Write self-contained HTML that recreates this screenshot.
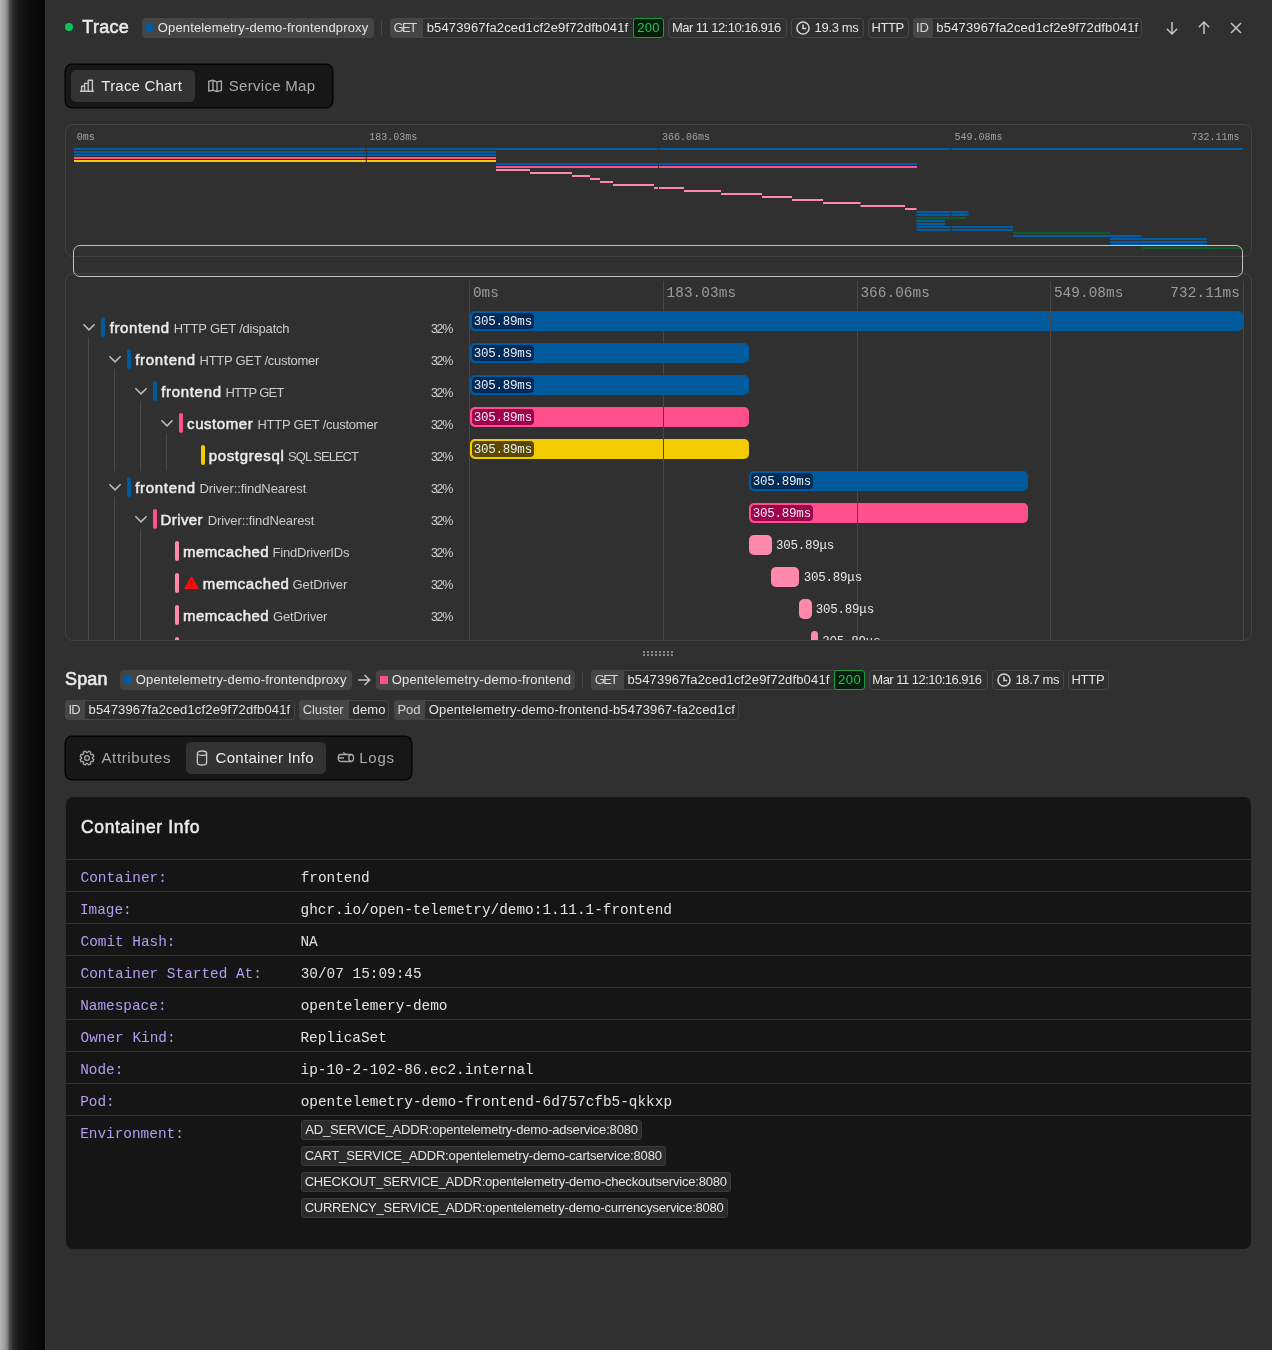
<!DOCTYPE html>
<html><head><meta charset="utf-8">
<style>
*{box-sizing:border-box;margin:0;padding:0}
html,body{width:1272px;height:1350px;overflow:hidden;background:#303030;font-family:"Liberation Sans",sans-serif;color:#e6e6e6}
.a{position:absolute}
body>div.root{position:absolute;left:0;top:0;width:1272px;height:1350px;will-change:transform}
</style></head><body><div class="root">
<div class="a" style="left:0;top:0;width:45px;height:1350px;background:linear-gradient(90deg,#b4b4b4 0px,#a2a2a2 4px,#8a8a8a 7px,#505050 9.5px,#2c2c2c 13px,#181818 18px,#0e0e0e 28px,#090909 38px,#040404 45px)"></div>
<div class="a" style="left:45px;top:0px;width:1px;height:1350px;background:#3a3a3a;border-radius:0px;"></div>
<div class="a" style="left:65px;top:23px;width:8px;height:8px;background:#12c05a;border-radius:4px;"></div>
<div class="a" style="left:82.27px;top:17px;font-family:'Liberation Sans',sans-serif;font-size:18px;font-weight:400;line-height:20px;color:#ececec;white-space:nowrap;letter-spacing:0.286px;-webkit-text-stroke:0.55px #ececec;">Trace</div>
<div class="a" style="left:142px;top:18px;width:232px;height:20px;background:#444444;border-radius:4px;"></div>
<div class="a" style="left:146px;top:24.0px;width:8px;height:8.0px;background:#005a9e;border-radius:1px;"></div>
<div class="a" style="left:157.78px;top:18px;font-family:'Liberation Sans',sans-serif;font-size:13px;font-weight:400;line-height:20px;color:#e4e4e4;white-space:nowrap;letter-spacing:0.145px;">Opentelemetry-demo-frontendproxy</div>
<div class="a" style="left:381px;top:20px;width:1px;height:16px;background:#474747;border-radius:0px;"></div>
<div class="a" style="left:390px;top:18px;width:274px;height:20px;background:#2d2d2d;border:1px solid #474747;border-radius:4px;"></div>
<div class="a" style="left:390px;top:18px;width:33px;height:20px;background:#464646;border-radius:4px;border-top-right-radius:0;border-bottom-right-radius:0"></div>
<div class="a" style="left:393.55px;top:18px;font-family:'Liberation Sans',sans-serif;font-size:13px;font-weight:400;line-height:20px;color:#d6d6d6;white-space:nowrap;letter-spacing:-1.586px;">GET</div>
<div class="a" style="left:426.76px;top:18px;font-family:'Liberation Sans',sans-serif;font-size:13px;font-weight:400;line-height:20px;color:#e4e4e4;white-space:nowrap;letter-spacing:0.140px;">b5473967fa2ced1cf2e9f72dfb041f</div>
<div class="a" style="left:633px;top:18px;width:31px;height:20px;background:#03200b;border:1px solid #1c9a45;border-radius:3px;"></div>
<div class="a" style="left:637.35px;top:18px;font-family:'Liberation Sans',sans-serif;font-size:13px;font-weight:400;line-height:20px;color:#2cc05a;white-space:nowrap;letter-spacing:0.186px;">200</div>
<div class="a" style="left:668px;top:18px;width:119px;height:20px;background:none;border:1px solid #474747;border-radius:4px;"></div>
<div class="a" style="left:671.93px;top:18px;font-family:'Liberation Sans',sans-serif;font-size:13px;font-weight:400;line-height:20px;color:#e4e4e4;white-space:nowrap;letter-spacing:-0.541px;">Mar 11 12:10:16.916</div>
<div class="a" style="left:791px;top:18px;width:73px;height:20px;background:none;border:1px solid #474747;border-radius:4px;"></div>
<svg class="a" style="left:796px;top:20.5px" width="14" height="14" viewBox="0 0 14 14"><circle cx="7" cy="7" r="6.1" fill="none" stroke="#d4d4d4" stroke-width="1.5"/><path d="M7 3.6V7.4H10.2" fill="none" stroke="#d4d4d4" stroke-width="1.5"/></svg>
<div class="a" style="left:814.61px;top:18px;font-family:'Liberation Sans',sans-serif;font-size:13px;font-weight:400;line-height:20px;color:#e4e4e4;white-space:nowrap;letter-spacing:-0.330px;">19.3 ms</div>
<div class="a" style="left:868px;top:18px;width:41px;height:20px;background:none;border:1px solid #474747;border-radius:4px;"></div>
<div class="a" style="left:871.43px;top:18px;font-family:'Liberation Sans',sans-serif;font-size:13px;font-weight:400;line-height:20px;color:#e4e4e4;white-space:nowrap;letter-spacing:-0.363px;">HTTP</div>
<div class="a" style="left:913px;top:18px;width:229px;height:20px;background:#2d2d2d;border:1px solid #474747;border-radius:4px;"></div>
<div class="a" style="left:913px;top:18px;width:20px;height:20px;background:#464646;border-radius:4px;border-top-right-radius:0;border-bottom-right-radius:0"></div>
<div class="a" style="left:915.90px;top:18px;font-family:'Liberation Sans',sans-serif;font-size:13px;font-weight:400;line-height:20px;color:#d6d6d6;white-space:nowrap;letter-spacing:0.122px;">ID</div>
<div class="a" style="left:936.36px;top:18px;font-family:'Liberation Sans',sans-serif;font-size:13px;font-weight:400;line-height:20px;color:#e4e4e4;white-space:nowrap;letter-spacing:0.154px;">b5473967fa2ced1cf2e9f72dfb041f</div>
<svg class="a" style="left:1164px;top:19px" width="16" height="17" viewBox="0 0 16 17"><path d="M8 3V15M2.8 9.8L8 15L13.2 9.8" fill="none" stroke="#c4c4c4" stroke-width="1.5"/></svg>
<svg class="a" style="left:1196px;top:19px" width="16" height="17" viewBox="0 0 16 17"><path d="M8 15V3M2.8 8.2L8 3L13.2 8.2" fill="none" stroke="#c4c4c4" stroke-width="1.5"/></svg>
<svg class="a" style="left:1228px;top:20px" width="16" height="16" viewBox="0 0 16 16"><path d="M3 3L13 13M13 3L3 13" fill="none" stroke="#c4c4c4" stroke-width="1.5"/></svg>
<div class="a" style="left:65px;top:64px;width:268px;height:44px;background:#171717;border:1px solid #060606;border-radius:7px;box-shadow:0 0 0 0.5px #000"></div>
<div class="a" style="left:71px;top:70px;width:124px;height:32px;background:#333333;border-radius:5px;"></div>
<svg class="a" style="left:79px;top:79px" width="16" height="14" viewBox="0 0 16 14"><path d="M1 12.3H15M2.6 12.2V7.2H5.6V12.2M5.6 12.2V4.4H9.2V12.2M9.2 12.2V1.2H13.4V12.2" fill="none" stroke="#c8c8c8" stroke-width="1.4" stroke-linejoin="round"/></svg>
<div class="a" style="left:101.36px;top:76px;font-family:'Liberation Sans',sans-serif;font-size:15px;font-weight:400;line-height:20px;color:#ededed;white-space:nowrap;letter-spacing:0.196px;">Trace Chart</div>
<svg class="a" style="left:207px;top:79px" width="16" height="14" viewBox="0 0 16 14"><path d="M1.8 2.3L6 1.3L10 2.9L14.4 2.0V11.4L10 12.6L6 11.2L1.8 12.1Z M6 1.3V11.2 M10 2.9V12.6" fill="none" stroke="#a8a8a8" stroke-width="1.4" stroke-linejoin="round"/></svg>
<div class="a" style="left:228.82px;top:76px;font-family:'Liberation Sans',sans-serif;font-size:15px;font-weight:400;line-height:20px;color:#ababab;white-space:nowrap;letter-spacing:0.285px;">Service Map</div>
<div class="a" style="left:65px;top:124px;width:1187px;height:133px;background:none;border:1px solid #444;border-radius:8px;"></div>
<div class="a" style="left:76.79px;top:128px;font-family:'Liberation Mono',monospace;font-size:10px;font-weight:400;line-height:20px;color:#a0a0a0;white-space:nowrap;">0ms</div>
<div class="a" style="left:369.28px;top:128px;font-family:'Liberation Mono',monospace;font-size:10px;font-weight:400;line-height:20px;color:#a0a0a0;white-space:nowrap;">183.03ms</div>
<div class="a" style="left:661.88px;top:128px;font-family:'Liberation Mono',monospace;font-size:10px;font-weight:400;line-height:20px;color:#a0a0a0;white-space:nowrap;">366.06ms</div>
<div class="a" style="left:954.58px;top:128px;font-family:'Liberation Mono',monospace;font-size:10px;font-weight:400;line-height:20px;color:#a0a0a0;white-space:nowrap;">549.08ms</div>
<div class="a" style="left:1191.53px;top:128px;font-family:'Liberation Mono',monospace;font-size:10px;font-weight:400;line-height:20px;color:#a0a0a0;white-space:nowrap;">732.11ms</div>
<svg class="a" style="left:0;top:0" width="1272" height="300"><rect x="74" y="148" width="1169" height="2" fill="#005ea5"/><rect x="74" y="151" width="422" height="2" fill="#005ea5"/><rect x="74" y="154" width="422" height="2" fill="#005ea5"/><rect x="74" y="157" width="422" height="2" fill="#ff4f8c"/><rect x="74" y="160" width="422" height="2" fill="#f2cc00"/><rect x="496" y="163" width="421" height="2" fill="#005ea5"/><rect x="496" y="166" width="421" height="2" fill="#ff4f8c"/><rect x="496" y="169" width="34" height="2" fill="#ff88ab"/><rect x="530" y="172" width="42" height="2" fill="#ff88ab"/><rect x="572" y="175" width="18" height="2" fill="#ff88ab"/><rect x="590" y="178" width="10" height="2" fill="#ff88ab"/><rect x="600" y="181" width="13" height="2" fill="#ff88ab"/><rect x="613" y="184" width="41" height="2" fill="#ff88ab"/><rect x="654" y="187" width="30" height="2" fill="#ff88ab"/><rect x="684" y="190" width="37" height="2" fill="#ff88ab"/><rect x="721" y="193" width="41" height="2" fill="#ff88ab"/><rect x="762" y="196" width="30" height="2" fill="#ff88ab"/><rect x="792" y="199" width="31" height="2" fill="#ff88ab"/><rect x="823" y="202" width="37.5" height="2" fill="#ff88ab"/><rect x="860.5" y="205" width="44.5" height="2" fill="#ff88ab"/><rect x="905" y="208" width="11.5" height="2" fill="#ff88ab"/><rect x="916.5" y="211" width="52.0" height="2" fill="#005ea5"/><rect x="916.5" y="214" width="52.0" height="2" fill="#005ea5"/><rect x="916.5" y="217" width="49.5" height="2" fill="#0b5e2c"/><rect x="916.5" y="220" width="28.799999999999955" height="2" fill="#005ea5"/><rect x="916.5" y="223" width="28.799999999999955" height="2" fill="#005ea5"/><rect x="916.5" y="226" width="96.5" height="2" fill="#005ea5"/><rect x="916.5" y="229" width="96.5" height="2" fill="#005ea5"/><rect x="1013" y="232" width="97" height="2" fill="#0b5e2c"/><rect x="1013" y="235" width="129" height="2" fill="#005ea5"/><rect x="1110" y="238" width="97" height="2" fill="#005ea5"/><rect x="1110" y="241" width="97" height="2" fill="#005ea5"/><rect x="1110" y="244" width="97" height="2" fill="#005ea5"/><rect x="1142" y="247" width="100" height="2" fill="#0b5e2c"/><rect x="365.8" y="146" width="1" height="104" fill="#303030"/><rect x="658.0" y="146" width="1" height="104" fill="#303030"/><rect x="950.3" y="146" width="1" height="104" fill="#303030"/></svg>
<div class="a" style="left:65px;top:273px;width:1187px;height:368px;background:none;border:1px solid #444;border-radius:8px;"></div>
<div class="a" style="left:66px;top:274px;width:1185px;height:366px;overflow:hidden;border-radius:0 0 7px 7px"><div class="a" style="left:-66px;top:-274px;width:1272px;height:1350px">
<div class="a" style="left:469px;top:281px;width:1px;height:360px;background:#444;border-radius:0px;"></div>
<div class="a" style="left:472.93px;top:283px;font-family:'Liberation Mono',monospace;font-size:14.4px;font-weight:400;line-height:20px;color:#9c9c9c;white-space:nowrap;">0ms</div>
<div class="a" style="left:666.46px;top:283px;font-family:'Liberation Mono',monospace;font-size:14.4px;font-weight:400;line-height:20px;color:#9c9c9c;white-space:nowrap;letter-spacing:0.085px;">183.03ms</div>
<div class="a" style="left:860.40px;top:283px;font-family:'Liberation Mono',monospace;font-size:14.4px;font-weight:400;line-height:20px;color:#9c9c9c;white-space:nowrap;letter-spacing:0.051px;">366.06ms</div>
<div class="a" style="left:1053.90px;top:283px;font-family:'Liberation Mono',monospace;font-size:14.4px;font-weight:400;line-height:20px;color:#9c9c9c;white-space:nowrap;letter-spacing:0.051px;">549.08ms</div>
<div class="a" style="left:1170.29px;top:283px;font-family:'Liberation Mono',monospace;font-size:14.4px;font-weight:400;line-height:20px;color:#9c9c9c;white-space:nowrap;letter-spacing:0.081px;">732.11ms</div>
<div class="a" style="left:88px;top:337px;width:1px;height:304px;background:#4a4a4a;border-radius:0px;"></div>
<div class="a" style="left:114px;top:369px;width:1px;height:102px;background:#4a4a4a;border-radius:0px;"></div>
<div class="a" style="left:140px;top:401px;width:1px;height:70px;background:#4a4a4a;border-radius:0px;"></div>
<div class="a" style="left:166px;top:433px;width:1px;height:38px;background:#4a4a4a;border-radius:0px;"></div>
<div class="a" style="left:114px;top:497px;width:1px;height:144px;background:#4a4a4a;border-radius:0px;"></div>
<div class="a" style="left:140px;top:529px;width:1px;height:112px;background:#4a4a4a;border-radius:0px;"></div>
<svg class="a" style="left:82px;top:323.0px" width="14" height="9" viewBox="0 0 14 9"><path d="M1.4 1.2L7 6.8L12.6 1.2" fill="none" stroke="#bdbdbd" stroke-width="1.6"/></svg>
<div class="a" style="left:101px;top:317px;width:4px;height:20px;background:#005a9e;border-radius:2px;"></div>
<div class="a" style="left:109.64px;top:318px;font-family:'Liberation Sans',sans-serif;font-size:15px;font-weight:400;line-height:20px;color:#ececec;white-space:nowrap;letter-spacing:0.634px;-webkit-text-stroke:0.5px #ececec;">frontend</div>
<div class="a" style="left:173.63px;top:319px;font-family:'Liberation Sans',sans-serif;font-size:13px;font-weight:400;line-height:20px;color:#cccccc;white-space:nowrap;letter-spacing:-0.206px;">HTTP GET /dispatch</div>
<div class="a" style="left:430.92px;top:319px;font-family:'Liberation Sans',sans-serif;font-size:12.5px;font-weight:400;line-height:20px;color:#d2d2d2;white-space:nowrap;letter-spacing:-1.298px;">32%</div>
<svg class="a" style="left:108px;top:355.0px" width="14" height="9" viewBox="0 0 14 9"><path d="M1.4 1.2L7 6.8L12.6 1.2" fill="none" stroke="#bdbdbd" stroke-width="1.6"/></svg>
<div class="a" style="left:127px;top:349px;width:4px;height:20px;background:#005a9e;border-radius:2px;"></div>
<div class="a" style="left:135.24px;top:350px;font-family:'Liberation Sans',sans-serif;font-size:15px;font-weight:400;line-height:20px;color:#ececec;white-space:nowrap;letter-spacing:0.677px;-webkit-text-stroke:0.5px #ececec;">frontend</div>
<div class="a" style="left:199.53px;top:351px;font-family:'Liberation Sans',sans-serif;font-size:13px;font-weight:400;line-height:20px;color:#cccccc;white-space:nowrap;letter-spacing:-0.275px;">HTTP GET /customer</div>
<div class="a" style="left:430.92px;top:351px;font-family:'Liberation Sans',sans-serif;font-size:12.5px;font-weight:400;line-height:20px;color:#d2d2d2;white-space:nowrap;letter-spacing:-1.298px;">32%</div>
<svg class="a" style="left:134px;top:387.0px" width="14" height="9" viewBox="0 0 14 9"><path d="M1.4 1.2L7 6.8L12.6 1.2" fill="none" stroke="#bdbdbd" stroke-width="1.6"/></svg>
<div class="a" style="left:153px;top:381px;width:4px;height:20px;background:#005a9e;border-radius:2px;"></div>
<div class="a" style="left:161.14px;top:382px;font-family:'Liberation Sans',sans-serif;font-size:15px;font-weight:400;line-height:20px;color:#ececec;white-space:nowrap;letter-spacing:0.691px;-webkit-text-stroke:0.5px #ececec;">frontend</div>
<div class="a" style="left:225.43px;top:383px;font-family:'Liberation Sans',sans-serif;font-size:13px;font-weight:400;line-height:20px;color:#cccccc;white-space:nowrap;letter-spacing:-0.716px;">HTTP GET</div>
<div class="a" style="left:430.92px;top:383px;font-family:'Liberation Sans',sans-serif;font-size:12.5px;font-weight:400;line-height:20px;color:#d2d2d2;white-space:nowrap;letter-spacing:-1.298px;">32%</div>
<svg class="a" style="left:160px;top:419.0px" width="14" height="9" viewBox="0 0 14 9"><path d="M1.4 1.2L7 6.8L12.6 1.2" fill="none" stroke="#bdbdbd" stroke-width="1.6"/></svg>
<div class="a" style="left:179px;top:413px;width:4px;height:20px;background:#ff4f8c;border-radius:2px;"></div>
<div class="a" style="left:187.11px;top:414px;font-family:'Liberation Sans',sans-serif;font-size:15px;font-weight:400;line-height:20px;color:#ececec;white-space:nowrap;letter-spacing:0.557px;-webkit-text-stroke:0.5px #ececec;">customer</div>
<div class="a" style="left:257.43px;top:415px;font-family:'Liberation Sans',sans-serif;font-size:13px;font-weight:400;line-height:20px;color:#cccccc;white-space:nowrap;letter-spacing:-0.246px;">HTTP GET /customer</div>
<div class="a" style="left:430.92px;top:415px;font-family:'Liberation Sans',sans-serif;font-size:12.5px;font-weight:400;line-height:20px;color:#d2d2d2;white-space:nowrap;letter-spacing:-1.298px;">32%</div>
<div class="a" style="left:201px;top:445px;width:4px;height:20px;background:#f2cc00;border-radius:2px;"></div>
<div class="a" style="left:208.68px;top:446px;font-family:'Liberation Sans',sans-serif;font-size:15px;font-weight:400;line-height:20px;color:#ececec;white-space:nowrap;letter-spacing:0.663px;-webkit-text-stroke:0.5px #ececec;">postgresql</div>
<div class="a" style="left:288.11px;top:447px;font-family:'Liberation Sans',sans-serif;font-size:13px;font-weight:400;line-height:20px;color:#cccccc;white-space:nowrap;letter-spacing:-0.990px;">SQL SELECT</div>
<div class="a" style="left:430.92px;top:447px;font-family:'Liberation Sans',sans-serif;font-size:12.5px;font-weight:400;line-height:20px;color:#d2d2d2;white-space:nowrap;letter-spacing:-1.298px;">32%</div>
<svg class="a" style="left:108px;top:483.0px" width="14" height="9" viewBox="0 0 14 9"><path d="M1.4 1.2L7 6.8L12.6 1.2" fill="none" stroke="#bdbdbd" stroke-width="1.6"/></svg>
<div class="a" style="left:127px;top:477px;width:4px;height:20px;background:#005a9e;border-radius:2px;"></div>
<div class="a" style="left:135.24px;top:478px;font-family:'Liberation Sans',sans-serif;font-size:15px;font-weight:400;line-height:20px;color:#ececec;white-space:nowrap;letter-spacing:0.677px;-webkit-text-stroke:0.5px #ececec;">frontend</div>
<div class="a" style="left:199.53px;top:479px;font-family:'Liberation Sans',sans-serif;font-size:13px;font-weight:400;line-height:20px;color:#cccccc;white-space:nowrap;letter-spacing:-0.084px;">Driver::findNearest</div>
<div class="a" style="left:430.92px;top:479px;font-family:'Liberation Sans',sans-serif;font-size:12.5px;font-weight:400;line-height:20px;color:#d2d2d2;white-space:nowrap;letter-spacing:-1.298px;">32%</div>
<svg class="a" style="left:134px;top:515.0px" width="14" height="9" viewBox="0 0 14 9"><path d="M1.4 1.2L7 6.8L12.6 1.2" fill="none" stroke="#bdbdbd" stroke-width="1.6"/></svg>
<div class="a" style="left:153px;top:509px;width:4px;height:20px;background:#ff4f8c;border-radius:2px;"></div>
<div class="a" style="left:160.62px;top:510px;font-family:'Liberation Sans',sans-serif;font-size:15px;font-weight:400;line-height:20px;color:#ececec;white-space:nowrap;letter-spacing:0.396px;-webkit-text-stroke:0.5px #ececec;">Driver</div>
<div class="a" style="left:207.63px;top:511px;font-family:'Liberation Sans',sans-serif;font-size:13px;font-weight:400;line-height:20px;color:#cccccc;white-space:nowrap;letter-spacing:-0.089px;">Driver::findNearest</div>
<div class="a" style="left:430.92px;top:511px;font-family:'Liberation Sans',sans-serif;font-size:12.5px;font-weight:400;line-height:20px;color:#d2d2d2;white-space:nowrap;letter-spacing:-1.298px;">32%</div>
<div class="a" style="left:175px;top:541px;width:4px;height:20px;background:#ff88ab;border-radius:2px;"></div>
<div class="a" style="left:183.05px;top:542px;font-family:'Liberation Sans',sans-serif;font-size:15px;font-weight:400;line-height:20px;color:#ececec;white-space:nowrap;letter-spacing:0.495px;-webkit-text-stroke:0.5px #ececec;">memcached</div>
<div class="a" style="left:272.53px;top:543px;font-family:'Liberation Sans',sans-serif;font-size:13px;font-weight:400;line-height:20px;color:#cccccc;white-space:nowrap;letter-spacing:-0.210px;">FindDriverIDs</div>
<div class="a" style="left:430.92px;top:543px;font-family:'Liberation Sans',sans-serif;font-size:12.5px;font-weight:400;line-height:20px;color:#d2d2d2;white-space:nowrap;letter-spacing:-1.298px;">32%</div>
<div class="a" style="left:175px;top:573px;width:4px;height:20px;background:#ff88ab;border-radius:2px;"></div>
<svg class="a" style="left:183.5px;top:575.5px" width="15" height="14" viewBox="0 0 15 14"><path d="M7.5 1.3L13.7 12.2H1.3Z" fill="#f20f0f" stroke="#f20f0f" stroke-width="1.7" stroke-linejoin="round"/><rect x="6.75" y="4.8" width="1.5" height="3.6" rx="0.5" fill="#9c0b0b"/><rect x="6.75" y="9.4" width="1.5" height="1.3" rx="0.5" fill="#9c0b0b"/></svg>
<div class="a" style="left:202.85px;top:574px;font-family:'Liberation Sans',sans-serif;font-size:15px;font-weight:400;line-height:20px;color:#ececec;white-space:nowrap;letter-spacing:0.545px;-webkit-text-stroke:0.5px #ececec;">memcached</div>
<div class="a" style="left:292.55px;top:575px;font-family:'Liberation Sans',sans-serif;font-size:13px;font-weight:400;line-height:20px;color:#cccccc;white-space:nowrap;letter-spacing:-0.119px;">GetDriver</div>
<div class="a" style="left:430.92px;top:575px;font-family:'Liberation Sans',sans-serif;font-size:12.5px;font-weight:400;line-height:20px;color:#d2d2d2;white-space:nowrap;letter-spacing:-1.298px;">32%</div>
<div class="a" style="left:175px;top:605px;width:4px;height:20px;background:#ff88ab;border-radius:2px;"></div>
<div class="a" style="left:183.05px;top:606px;font-family:'Liberation Sans',sans-serif;font-size:15px;font-weight:400;line-height:20px;color:#ececec;white-space:nowrap;letter-spacing:0.495px;-webkit-text-stroke:0.5px #ececec;">memcached</div>
<div class="a" style="left:272.95px;top:607px;font-family:'Liberation Sans',sans-serif;font-size:13px;font-weight:400;line-height:20px;color:#cccccc;white-space:nowrap;letter-spacing:-0.144px;">GetDriver</div>
<div class="a" style="left:430.92px;top:607px;font-family:'Liberation Sans',sans-serif;font-size:12.5px;font-weight:400;line-height:20px;color:#d2d2d2;white-space:nowrap;letter-spacing:-1.298px;">32%</div>
<div class="a" style="left:175px;top:637px;width:4px;height:20px;background:#ff88ab;border-radius:2px;"></div>
<div class="a" style="left:183.05px;top:638px;font-family:'Liberation Sans',sans-serif;font-size:15px;font-weight:400;line-height:20px;color:#ececec;white-space:nowrap;letter-spacing:0.495px;-webkit-text-stroke:0.5px #ececec;">memcached</div>
<div class="a" style="left:272.95px;top:639px;font-family:'Liberation Sans',sans-serif;font-size:13px;font-weight:400;line-height:20px;color:#cccccc;white-space:nowrap;letter-spacing:-0.144px;">GetDriver</div>
<div class="a" style="left:430.92px;top:639px;font-family:'Liberation Sans',sans-serif;font-size:12.5px;font-weight:400;line-height:20px;color:#d2d2d2;white-space:nowrap;letter-spacing:-1.298px;">32%</div>
<div class="a" style="left:470px;top:311px;width:773px;height:20px;background:#005a9e;border-radius:5px;"></div>
<div class="a" style="left:470px;top:343px;width:279px;height:20px;background:#005a9e;border-radius:5px;"></div>
<div class="a" style="left:470px;top:375px;width:279px;height:20px;background:#005a9e;border-radius:5px;"></div>
<div class="a" style="left:470px;top:407px;width:279px;height:20px;background:#ff4f8c;border-radius:5px;"></div>
<div class="a" style="left:470px;top:439px;width:279px;height:20px;background:#f2cc00;border-radius:5px;"></div>
<div class="a" style="left:749px;top:471px;width:279px;height:20px;background:#005a9e;border-radius:5px;"></div>
<div class="a" style="left:749px;top:503px;width:279px;height:20px;background:#ff4f8c;border-radius:5px;"></div>
<div class="a" style="left:748.7px;top:535px;width:23.0px;height:20px;background:#ff88ab;border-radius:5px;"></div>
<div class="a" style="left:771.2px;top:567px;width:28.299999999999955px;height:20px;background:#ff88ab;border-radius:5px;"></div>
<div class="a" style="left:799px;top:599px;width:12.5px;height:20px;background:#ff88ab;border-radius:5px;"></div>
<div class="a" style="left:811px;top:631px;width:7px;height:20px;background:#ff88ab;border-radius:3.5px;"></div>
<div class="a" style="left:663px;top:281px;width:1px;height:360px;background:#474747;border-radius:0px;"></div>
<div class="a" style="left:857px;top:281px;width:1px;height:360px;background:#474747;border-radius:0px;"></div>
<div class="a" style="left:1050px;top:281px;width:1px;height:360px;background:#474747;border-radius:0px;"></div>
<div class="a" style="left:1243px;top:281px;width:1px;height:360px;background:#474747;border-radius:0px;"></div>
<div class="a" style="left:472px;top:313px;width:62px;height:16px;background:#002b57;border-radius:4px;"></div>
<div class="a" style="left:473.72px;top:312px;font-family:'Liberation Mono',monospace;font-size:12.5px;font-weight:400;line-height:20px;color:#e8eef5;white-space:nowrap;letter-spacing:-0.228px;">305.89ms</div>
<div class="a" style="left:472px;top:345px;width:62px;height:16px;background:#002b57;border-radius:4px;"></div>
<div class="a" style="left:473.72px;top:344px;font-family:'Liberation Mono',monospace;font-size:12.5px;font-weight:400;line-height:20px;color:#e8eef5;white-space:nowrap;letter-spacing:-0.228px;">305.89ms</div>
<div class="a" style="left:472px;top:377px;width:62px;height:16px;background:#002b57;border-radius:4px;"></div>
<div class="a" style="left:473.72px;top:376px;font-family:'Liberation Mono',monospace;font-size:12.5px;font-weight:400;line-height:20px;color:#e8eef5;white-space:nowrap;letter-spacing:-0.228px;">305.89ms</div>
<div class="a" style="left:472px;top:409px;width:62px;height:16px;background:#a1004a;border-radius:4px;"></div>
<div class="a" style="left:473.72px;top:408px;font-family:'Liberation Mono',monospace;font-size:12.5px;font-weight:400;line-height:20px;color:#e8eef5;white-space:nowrap;letter-spacing:-0.228px;">305.89ms</div>
<div class="a" style="left:472px;top:441px;width:62px;height:16px;background:#5a4700;border-radius:4px;"></div>
<div class="a" style="left:473.72px;top:440px;font-family:'Liberation Mono',monospace;font-size:12.5px;font-weight:400;line-height:20px;color:#e8eef5;white-space:nowrap;letter-spacing:-0.228px;">305.89ms</div>
<div class="a" style="left:751px;top:473px;width:62px;height:16px;background:#002b57;border-radius:4px;"></div>
<div class="a" style="left:752.72px;top:472px;font-family:'Liberation Mono',monospace;font-size:12.5px;font-weight:400;line-height:20px;color:#e8eef5;white-space:nowrap;letter-spacing:-0.228px;">305.89ms</div>
<div class="a" style="left:751px;top:505px;width:62px;height:16px;background:#a1004a;border-radius:4px;"></div>
<div class="a" style="left:752.72px;top:504px;font-family:'Liberation Mono',monospace;font-size:12.5px;font-weight:400;line-height:20px;color:#e8eef5;white-space:nowrap;letter-spacing:-0.228px;">305.89ms</div>
<div class="a" style="left:775.92px;top:536px;font-family:'Liberation Mono',monospace;font-size:12.5px;font-weight:400;line-height:20px;color:#e6e6e6;white-space:nowrap;letter-spacing:-0.228px;">305.89μs</div>
<div class="a" style="left:803.72px;top:568px;font-family:'Liberation Mono',monospace;font-size:12.5px;font-weight:400;line-height:20px;color:#e6e6e6;white-space:nowrap;letter-spacing:-0.228px;">305.89μs</div>
<div class="a" style="left:815.72px;top:600px;font-family:'Liberation Mono',monospace;font-size:12.5px;font-weight:400;line-height:20px;color:#e6e6e6;white-space:nowrap;letter-spacing:-0.228px;">305.89μs</div>
<div class="a" style="left:822.22px;top:632px;font-family:'Liberation Mono',monospace;font-size:12.5px;font-weight:400;line-height:20px;color:#e6e6e6;white-space:nowrap;letter-spacing:-0.228px;">305.89μs</div>
</div></div>
<div class="a" style="left:73px;top:245px;width:1170px;height:32px;background:none;border:1.5px solid #c2c2c2;border-radius:7px;"></div>
<svg class="a" style="left:642px;top:650px" width="34" height="8"><g fill="#8a8a8a"><rect x="1" y="1" width="2" height="2"/><rect x="5" y="1" width="2" height="2"/><rect x="9" y="1" width="2" height="2"/><rect x="13" y="1" width="2" height="2"/><rect x="17" y="1" width="2" height="2"/><rect x="21" y="1" width="2" height="2"/><rect x="25" y="1" width="2" height="2"/><rect x="29" y="1" width="2" height="2"/><rect x="1" y="4" width="2" height="2"/><rect x="5" y="4" width="2" height="2"/><rect x="9" y="4" width="2" height="2"/><rect x="13" y="4" width="2" height="2"/><rect x="17" y="4" width="2" height="2"/><rect x="21" y="4" width="2" height="2"/><rect x="25" y="4" width="2" height="2"/><rect x="29" y="4" width="2" height="2"/></g></svg>
<div class="a" style="left:65.06px;top:669px;font-family:'Liberation Sans',sans-serif;font-size:18px;font-weight:400;line-height:20px;color:#ececec;white-space:nowrap;letter-spacing:0.133px;-webkit-text-stroke:0.55px #ececec;">Span</div>
<svg class="a" style="left:357px;top:673px" width="14" height="14" viewBox="0 0 14 14"><path d="M1 7H12.6M7.6 2L12.6 7L7.6 12" fill="none" stroke="#c4c4c4" stroke-width="1.5"/></svg>
<div class="a" style="left:120px;top:670px;width:232px;height:20px;background:#444444;border-radius:4px;"></div>
<div class="a" style="left:124.3px;top:676.0px;width:8.000000000000014px;height:8.0px;background:#005a9e;border-radius:1px;"></div>
<div class="a" style="left:135.78px;top:670px;font-family:'Liberation Sans',sans-serif;font-size:13px;font-weight:400;line-height:20px;color:#e4e4e4;white-space:nowrap;letter-spacing:0.155px;">Opentelemetry-demo-frontendproxy</div>
<div class="a" style="left:376px;top:670px;width:199px;height:20px;background:#444444;border-radius:4px;"></div>
<div class="a" style="left:380px;top:676.0px;width:8px;height:8.0px;background:#ff4f8c;border-radius:1px;"></div>
<div class="a" style="left:391.68px;top:670px;font-family:'Liberation Sans',sans-serif;font-size:13px;font-weight:400;line-height:20px;color:#e4e4e4;white-space:nowrap;letter-spacing:0.200px;">Opentelemetry-demo-frontend</div>
<div class="a" style="left:582px;top:672px;width:1px;height:16px;background:#474747;border-radius:0px;"></div>
<div class="a" style="left:591px;top:670px;width:274px;height:20px;background:#2d2d2d;border:1px solid #474747;border-radius:4px;"></div>
<div class="a" style="left:591px;top:670px;width:33px;height:20px;background:#464646;border-radius:4px;border-top-right-radius:0;border-bottom-right-radius:0"></div>
<div class="a" style="left:594.65px;top:670px;font-family:'Liberation Sans',sans-serif;font-size:13px;font-weight:400;line-height:20px;color:#d6d6d6;white-space:nowrap;letter-spacing:-1.536px;">GET</div>
<div class="a" style="left:627.46px;top:670px;font-family:'Liberation Sans',sans-serif;font-size:13px;font-weight:400;line-height:20px;color:#e4e4e4;white-space:nowrap;letter-spacing:0.158px;">b5473967fa2ced1cf2e9f72dfb041f</div>
<div class="a" style="left:834px;top:670px;width:31px;height:20px;background:#03200b;border:1px solid #1c9a45;border-radius:3px;"></div>
<div class="a" style="left:838.05px;top:670px;font-family:'Liberation Sans',sans-serif;font-size:13px;font-weight:400;line-height:20px;color:#2cc05a;white-space:nowrap;letter-spacing:0.536px;">200</div>
<div class="a" style="left:869px;top:670px;width:119px;height:20px;background:none;border:1px solid #474747;border-radius:4px;"></div>
<div class="a" style="left:872.33px;top:670px;font-family:'Liberation Sans',sans-serif;font-size:13px;font-weight:400;line-height:20px;color:#e4e4e4;white-space:nowrap;letter-spacing:-0.524px;">Mar 11 12:10:16.916</div>
<div class="a" style="left:992px;top:670px;width:72px;height:20px;background:none;border:1px solid #474747;border-radius:4px;"></div>
<svg class="a" style="left:997px;top:673px" width="14" height="14" viewBox="0 0 14 14"><circle cx="7" cy="7" r="6.1" fill="none" stroke="#d4d4d4" stroke-width="1.5"/><path d="M7 3.6V7.4H10.2" fill="none" stroke="#d4d4d4" stroke-width="1.5"/></svg>
<div class="a" style="left:1015.41px;top:670px;font-family:'Liberation Sans',sans-serif;font-size:13px;font-weight:400;line-height:20px;color:#e4e4e4;white-space:nowrap;letter-spacing:-0.347px;">18.7 ms</div>
<div class="a" style="left:1068px;top:670px;width:41px;height:20px;background:none;border:1px solid #474747;border-radius:4px;"></div>
<div class="a" style="left:1071.43px;top:670px;font-family:'Liberation Sans',sans-serif;font-size:13px;font-weight:400;line-height:20px;color:#e4e4e4;white-space:nowrap;letter-spacing:-0.263px;">HTTP</div>
<div class="a" style="left:65px;top:700px;width:230px;height:20px;background:#2d2d2d;border:1px solid #474747;border-radius:4px;"></div>
<div class="a" style="left:65px;top:700px;width:20px;height:20px;background:#464646;border-radius:4px;border-top-right-radius:0;border-bottom-right-radius:0"></div>
<div class="a" style="left:68.40px;top:700px;font-family:'Liberation Sans',sans-serif;font-size:13px;font-weight:400;line-height:20px;color:#d6d6d6;white-space:nowrap;letter-spacing:-0.678px;">ID</div>
<div class="a" style="left:88.56px;top:700px;font-family:'Liberation Sans',sans-serif;font-size:13px;font-weight:400;line-height:20px;color:#e4e4e4;white-space:nowrap;letter-spacing:0.147px;">b5473967fa2ced1cf2e9f72dfb041f</div>
<div class="a" style="left:299px;top:700px;width:90px;height:20px;background:#2d2d2d;border:1px solid #474747;border-radius:4px;"></div>
<div class="a" style="left:299px;top:700px;width:50px;height:20px;background:#464646;border-radius:4px;border-top-right-radius:0;border-bottom-right-radius:0"></div>
<div class="a" style="left:302.64px;top:700px;font-family:'Liberation Sans',sans-serif;font-size:13px;font-weight:400;line-height:20px;color:#d6d6d6;white-space:nowrap;letter-spacing:-0.017px;">Cluster</div>
<div class="a" style="left:352.55px;top:700px;font-family:'Liberation Sans',sans-serif;font-size:13px;font-weight:400;line-height:20px;color:#e4e4e4;white-space:nowrap;letter-spacing:0.158px;">demo</div>
<div class="a" style="left:394px;top:700px;width:345px;height:20px;background:#2d2d2d;border:1px solid #474747;border-radius:4px;"></div>
<div class="a" style="left:394px;top:700px;width:31px;height:20px;background:#464646;border-radius:4px;border-top-right-radius:0;border-bottom-right-radius:0"></div>
<div class="a" style="left:397.43px;top:700px;font-family:'Liberation Sans',sans-serif;font-size:13px;font-weight:400;line-height:20px;color:#d6d6d6;white-space:nowrap;letter-spacing:-0.013px;">Pod</div>
<div class="a" style="left:428.68px;top:700px;font-family:'Liberation Sans',sans-serif;font-size:13px;font-weight:400;line-height:20px;color:#e4e4e4;white-space:nowrap;letter-spacing:0.206px;">Opentelemetry-demo-frontend-b5473967-fa2ced1cf</div>
<div class="a" style="left:65px;top:736px;width:347px;height:44px;background:#171717;border:1px solid #060606;border-radius:7px;box-shadow:0 0 0 0.5px #000"></div>
<div class="a" style="left:186px;top:742px;width:140px;height:32px;background:#333333;border-radius:5px;"></div>
<svg class="a" style="left:79px;top:750px" width="16" height="16" viewBox="0 0 16 16"><g fill="none" stroke="#a8a8a8" stroke-width="1.3" stroke-linejoin="round"><circle cx="8" cy="8" r="2.4"/><path d="M13.38 8.50 L14.83 9.55 L13.92 11.73 L12.16 11.45 L11.45 12.16 L11.73 13.92 L9.55 14.83 L8.50 13.38 L7.50 13.38 L6.45 14.83 L4.27 13.92 L4.55 12.16 L3.84 11.45 L2.08 11.73 L1.17 9.55 L2.62 8.50 L2.62 7.50 L1.17 6.45 L2.08 4.27 L3.84 4.55 L4.55 3.84 L4.27 2.08 L6.45 1.17 L7.50 2.62 L8.50 2.62 L9.55 1.17 L11.73 2.08 L11.45 3.84 L12.16 4.55 L13.92 4.27 L14.83 6.45 L13.38 7.50Z"/></g></svg>
<div class="a" style="left:101.47px;top:748px;font-family:'Liberation Sans',sans-serif;font-size:15px;font-weight:400;line-height:20px;color:#ababab;white-space:nowrap;letter-spacing:0.634px;">Attributes</div>
<svg class="a" style="left:196px;top:750px" width="12" height="16" viewBox="0 0 12 16"><g fill="none" stroke="#c8c8c8" stroke-width="1.3"><ellipse cx="6" cy="3.2" rx="4.6" ry="2.2"/><path d="M1.4 3.2V12.8C1.4 14 3.4 15 6 15C8.6 15 10.6 14 10.6 12.8V3.2"/></g></svg>
<div class="a" style="left:215.54px;top:748px;font-family:'Liberation Sans',sans-serif;font-size:15px;font-weight:400;line-height:20px;color:#ededed;white-space:nowrap;letter-spacing:0.290px;">Container Info</div>
<svg class="a" style="left:337px;top:751px" width="18" height="14" viewBox="0 0 18 14"><g fill="none" stroke="#a8a8a8" stroke-width="1.3" stroke-linejoin="round"><path d="M3.5 3.5H14.2C15.6 3.5 16.6 5 16.6 7C16.6 9 15.6 10.5 14.2 10.5H3.5C2.1 10.5 1.2 9 1.2 7C1.2 5 2.1 3.5 3.5 3.5Z"/><path d="M14.2 3.5C12.8 3.5 11.8 5 11.8 7C11.8 9 12.8 10.5 14.2 10.5"/><path d="M1.2 7H7M6 1.5L9.5 3.5"/></g></svg>
<div class="a" style="left:359.27px;top:748px;font-family:'Liberation Sans',sans-serif;font-size:15px;font-weight:400;line-height:20px;color:#ababab;white-space:nowrap;letter-spacing:0.749px;">Logs</div>
<div class="a" style="left:66px;top:797px;width:1185px;height:452px;background:#151515;border-radius:7px;"></div>
<div class="a" style="left:81.06px;top:817px;font-family:'Liberation Sans',sans-serif;font-size:17.5px;font-weight:400;line-height:20px;color:#ececec;white-space:nowrap;letter-spacing:0.653px;-webkit-text-stroke:0.5px #ececec;">Container Info</div>
<div class="a" style="left:66px;top:859px;width:1185px;height:1px;background:#313131;border-radius:0px;"></div>
<div class="a" style="left:80.51px;top:868px;font-family:'Liberation Mono',monospace;font-size:14.4px;font-weight:400;line-height:20px;color:#b49cf2;white-space:nowrap;">Container:</div>
<div class="a" style="left:300.63px;top:868px;font-family:'Liberation Mono',monospace;font-size:14.4px;font-weight:400;line-height:20px;color:#e2e2e2;white-space:nowrap;">frontend</div>
<div class="a" style="left:66px;top:891px;width:1185px;height:1px;background:#313131;border-radius:0px;"></div>
<div class="a" style="left:79.88px;top:900px;font-family:'Liberation Mono',monospace;font-size:14.4px;font-weight:400;line-height:20px;color:#b49cf2;white-space:nowrap;">Image:</div>
<div class="a" style="left:300.59px;top:900px;font-family:'Liberation Mono',monospace;font-size:14.4px;font-weight:400;line-height:20px;color:#e2e2e2;white-space:nowrap;">ghcr.io/open-telemetry/demo:1.11.1-frontend</div>
<div class="a" style="left:66px;top:923px;width:1185px;height:1px;background:#313131;border-radius:0px;"></div>
<div class="a" style="left:80.51px;top:932px;font-family:'Liberation Mono',monospace;font-size:14.4px;font-weight:400;line-height:20px;color:#b49cf2;white-space:nowrap;">Comit Hash:</div>
<div class="a" style="left:300.46px;top:932px;font-family:'Liberation Mono',monospace;font-size:14.4px;font-weight:400;line-height:20px;color:#e2e2e2;white-space:nowrap;">NA</div>
<div class="a" style="left:66px;top:955px;width:1185px;height:1px;background:#313131;border-radius:0px;"></div>
<div class="a" style="left:80.51px;top:964px;font-family:'Liberation Mono',monospace;font-size:14.4px;font-weight:400;line-height:20px;color:#b49cf2;white-space:nowrap;">Container Started At:</div>
<div class="a" style="left:300.70px;top:964px;font-family:'Liberation Mono',monospace;font-size:14.4px;font-weight:400;line-height:20px;color:#e2e2e2;white-space:nowrap;">30/07 15:09:45</div>
<div class="a" style="left:66px;top:987px;width:1185px;height:1px;background:#313131;border-radius:0px;"></div>
<div class="a" style="left:80.16px;top:996px;font-family:'Liberation Mono',monospace;font-size:14.4px;font-weight:400;line-height:20px;color:#b49cf2;white-space:nowrap;">Namespace:</div>
<div class="a" style="left:300.69px;top:996px;font-family:'Liberation Mono',monospace;font-size:14.4px;font-weight:400;line-height:20px;color:#e2e2e2;white-space:nowrap;">opentelemery-demo</div>
<div class="a" style="left:66px;top:1019px;width:1185px;height:1px;background:#313131;border-radius:0px;"></div>
<div class="a" style="left:80.58px;top:1028px;font-family:'Liberation Mono',monospace;font-size:14.4px;font-weight:400;line-height:20px;color:#b49cf2;white-space:nowrap;">Owner Kind:</div>
<div class="a" style="left:300.46px;top:1028px;font-family:'Liberation Mono',monospace;font-size:14.4px;font-weight:400;line-height:20px;color:#e2e2e2;white-space:nowrap;">ReplicaSet</div>
<div class="a" style="left:66px;top:1051px;width:1185px;height:1px;background:#313131;border-radius:0px;"></div>
<div class="a" style="left:80.16px;top:1060px;font-family:'Liberation Mono',monospace;font-size:14.4px;font-weight:400;line-height:20px;color:#b49cf2;white-space:nowrap;">Node:</div>
<div class="a" style="left:300.59px;top:1060px;font-family:'Liberation Mono',monospace;font-size:14.4px;font-weight:400;line-height:20px;color:#e2e2e2;white-space:nowrap;">ip-10-2-102-86.ec2.internal</div>
<div class="a" style="left:66px;top:1083px;width:1185px;height:1px;background:#313131;border-radius:0px;"></div>
<div class="a" style="left:80.16px;top:1092px;font-family:'Liberation Mono',monospace;font-size:14.4px;font-weight:400;line-height:20px;color:#b49cf2;white-space:nowrap;">Pod:</div>
<div class="a" style="left:300.69px;top:1092px;font-family:'Liberation Mono',monospace;font-size:14.4px;font-weight:400;line-height:20px;color:#e2e2e2;white-space:nowrap;">opentelemetry-demo-frontend-6d757cfb5-qkkxp</div>
<div class="a" style="left:66px;top:1115px;width:1185px;height:1px;background:#313131;border-radius:0px;"></div>
<div class="a" style="left:80.16px;top:1124px;font-family:'Liberation Mono',monospace;font-size:14.4px;font-weight:400;line-height:20px;color:#b49cf2;white-space:nowrap;">Environment:</div>
<div class="a" style="left:301px;top:1120px;width:341px;height:20px;background:#2b2b2b;border:1px solid #3a3a3a;border-radius:3px;"></div>
<div class="a" style="left:305.27px;top:1120px;font-family:'Liberation Sans',sans-serif;font-size:13px;font-weight:400;line-height:20px;color:#e4e4e4;white-space:nowrap;letter-spacing:-0.184px;">AD_SERVICE_ADDR:opentelemetry-demo-adservice:8080</div>
<div class="a" style="left:301px;top:1146px;width:365px;height:20px;background:#2b2b2b;border:1px solid #3a3a3a;border-radius:3px;"></div>
<div class="a" style="left:304.64px;top:1146px;font-family:'Liberation Sans',sans-serif;font-size:13px;font-weight:400;line-height:20px;color:#e4e4e4;white-space:nowrap;letter-spacing:-0.164px;">CART_SERVICE_ADDR:opentelemetry-demo-cartservice:8080</div>
<div class="a" style="left:301px;top:1172px;width:430px;height:20px;background:#2b2b2b;border:1px solid #3a3a3a;border-radius:3px;"></div>
<div class="a" style="left:304.64px;top:1172px;font-family:'Liberation Sans',sans-serif;font-size:13px;font-weight:400;line-height:20px;color:#e4e4e4;white-space:nowrap;letter-spacing:-0.193px;">CHECKOUT_SERVICE_ADDR:opentelemetry-demo-checkoutservice:8080</div>
<div class="a" style="left:301px;top:1198px;width:427px;height:20px;background:#2b2b2b;border:1px solid #3a3a3a;border-radius:3px;"></div>
<div class="a" style="left:304.64px;top:1198px;font-family:'Liberation Sans',sans-serif;font-size:13px;font-weight:400;line-height:20px;color:#e4e4e4;white-space:nowrap;letter-spacing:-0.223px;">CURRENCY_SERVICE_ADDR:opentelemetry-demo-currencyservice:8080</div>
</div></body></html>
